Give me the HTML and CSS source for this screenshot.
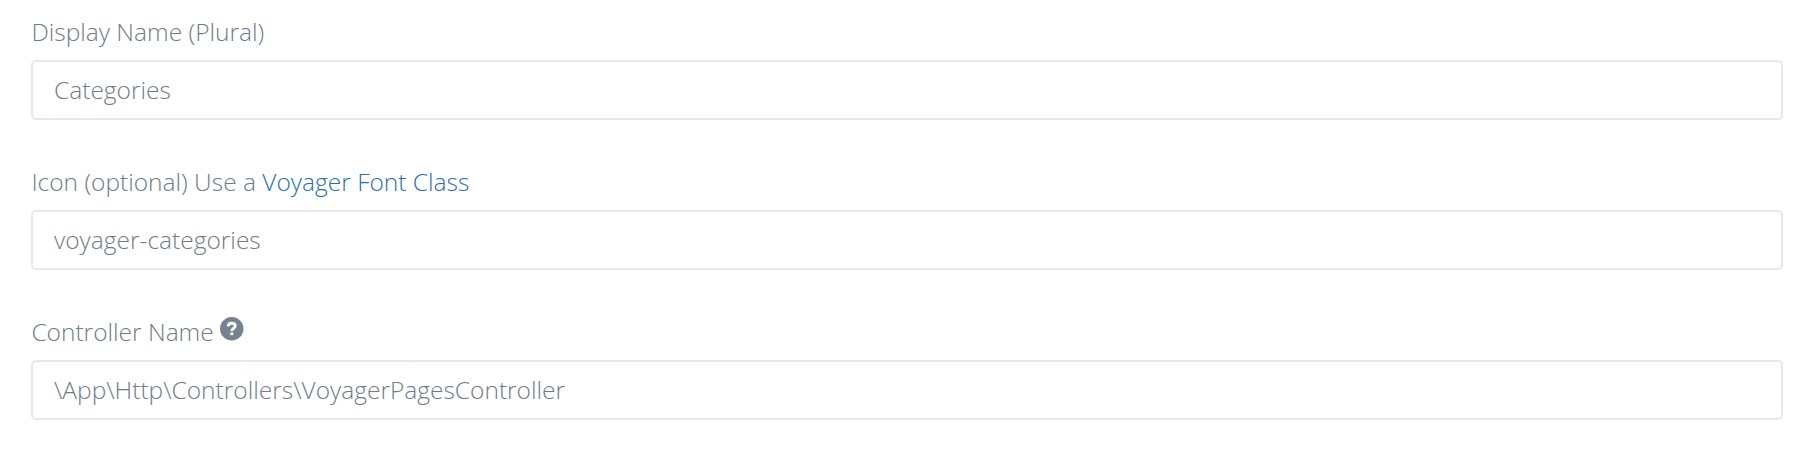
FILE: index.html
```html
<!DOCTYPE html>
<html lang="en">
<head>
<meta charset="utf-8">
<title>Edit BREAD</title>
<link rel="stylesheet" href="styles.css">
</head>
<body>
<form class="form">
  <div class="group">
    <label class="label" for="plural">Display Name (Plural)</label>
    <input class="control" id="plural" type="text" value="Categories">
  </div>
  <div class="group">
    <label class="label" for="icon">Icon (optional) Use a <a class="link" href="#">Voyager Font Class</a></label>
    <input class="control" id="icon" type="text" value="voyager-categories">
  </div>
  <div class="group">
    <label class="label" for="controller">Controller Name
      <svg class="help" viewBox="0 0 24 24" aria-hidden="true">
        <circle cx="12" cy="12" r="12" fill="currentColor"/>
        <path d="M8.4 9.6C8.5 7.4 9.9 6.4 12 6.4c2 0 3.5 1 3.5 2.8 0 2.5-3.4 2.3-3.4 5" fill="none" stroke="#fff" stroke-width="2.9"/>
        <path d="M10.6 15.7h3v2.8h-3z" fill="#fff"/>
      </svg></label>
    <input class="control" id="controller" type="text" value="\App\Http\Controllers\VoyagerPagesController">
  </div>
</form>
</body>
</html>
```
FILE: styles.css
```css
* { box-sizing: border-box; }
body {
  margin: 0;
  background: #fff;
  color: #6f7c88;
  font: 300 24.5px/36px "Open Sans", sans-serif;
}
.form { padding: 14px 26px 0 31px; }
.group { height: 150px; }
.label {
  display: block;
  height: 46px;
  padding-left: 0.4px;
  line-height: 35px;
  white-space: nowrap;
}
.link { color: #2a70b0; text-decoration: none; }
.control {
  display: block;
  width: 100%;
  height: 60px;
  padding: 0 21px 1px;
  border: 2px solid #e4eaec;
  border-radius: 5px;
  background: #fff;
  color: #6f7c88;
  font: inherit;
  outline: 0;
}
.help {
  width: 23.5px;
  height: 23.5px;
  color: #76838f;
  vertical-align: 0.5px;
}
```
